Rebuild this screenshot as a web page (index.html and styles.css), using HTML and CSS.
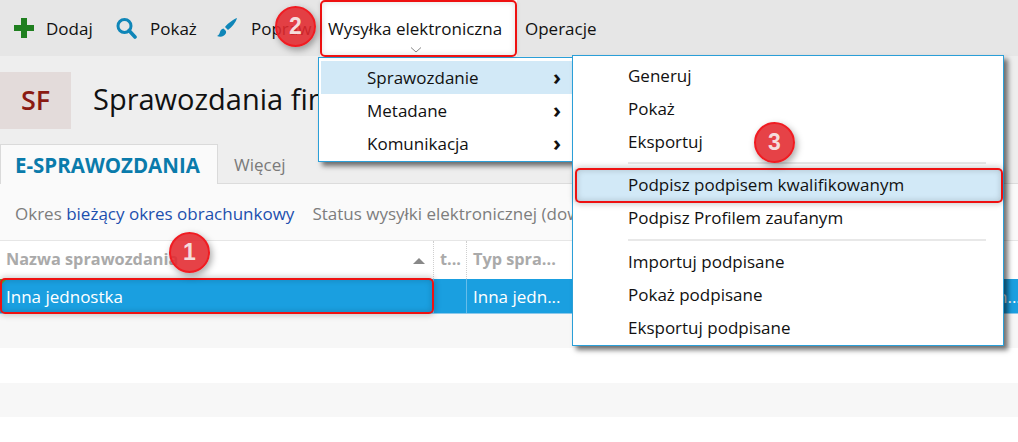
FILE: index.html
```html
<!DOCTYPE html>
<html lang="pl">
<head>
<meta charset="utf-8">
<title>Sprawozdania finansowe</title>
<link rel="stylesheet" href="styles.css">
</head>
<body>
<div class="toolbar">
  <div class="tool tool-add">
    <svg class="ico" width="22" height="22" viewBox="0 0 22 22"><path d="M8 1h6v7h7v6h-7v7H8v-7H1V8h7z" fill="#1f7f1f"/></svg>
    <span>Dodaj</span>
  </div>
  <div class="tool tool-show">
    <svg class="ico" width="22" height="22" viewBox="0 0 22 22"><circle cx="9.500" cy="9" r="6.500" fill="none" stroke="#0f86b8" stroke-width="3"/><path d="M14 13.500l6 6.500" stroke="#0f86b8" stroke-width="3.600" stroke-linecap="round"/></svg>
    <span>Pokaż</span>
  </div>
  <div class="tool tool-edit">
    <svg class="ico" width="22" height="22" viewBox="0 0 22 22"><path d="M21 1c-3 1-9 5-12 9l3 3c4-3 8-8 9-12zM7.500 11.500c-2 .5-3 1.500-3.500 3.500-.3 1.500-1.200 3-3 4 3.500 1.500 7.500.5 8.800-2.500.6-1.500.2-2.700-.3-3z" fill="#0f86b8"/></svg>
    <span>Popraw</span>
  </div>
  <div class="tool tool-send">
    <span>Wysyłka elektroniczna</span>
    <svg class="chev" width="12" height="6" viewBox="0 0 12 6"><path d="M1 .5l5 4.500 5-4.500" fill="none" stroke="#888"/></svg>
  </div>
  <div class="tool tool-ops"><span>Operacje</span></div>
</div>

<div class="module">
  <div class="tile">SF</div>
  <h1 class="module-title">Sprawozdania finansowe</h1>
</div>

<div class="tabs">
  <div class="tab tab-active">E-SPRAWOZDANIA</div>
  <div class="tab">Więcej</div>
</div>

<div class="filters">
  <span>Okres <a class="link">bieżący okres obrachunkowy</a></span>
  <span>Status wysyłki elektronicznej (dowolny)</span>
</div>

<div class="thead">
  <div class="th col-name">Nazwa sprawozdania<i class="sort"></i></div>
  <div class="th col-t">t...</div>
  <div class="th col-type">Typ spra...</div>
</div>
<div class="row row-selected">
  <div class="td col-name"><i class="flag"></i>Inna jednostka</div>
  <div class="td col-t"></div>
  <div class="td col-type">Inna jedn...</div>
  <div class="td col-end">n...</div>
</div>
<div class="row row-odd"></div>
<div class="row row-even"></div>
<div class="row row-odd"></div>

<div class="menu menu-main">
  <div class="mi mi-sub mi-hot"><span>Sprawozdanie</span><b class="arrow">›</b></div>
  <div class="mi mi-sub"><span>Metadane</span><b class="arrow">›</b></div>
  <div class="mi mi-sub"><span>Komunikacja</span><b class="arrow">›</b></div>
</div>

<div class="menu menu-sub">
  <div class="mi">Generuj</div>
  <div class="mi">Pokaż</div>
  <div class="mi">Eksportuj</div>
  <div class="sep"></div>
  <div class="mi mi-hot">Podpisz podpisem kwalifikowanym</div>
  <div class="mi">Podpisz Profilem zaufanym</div>
  <div class="sep sep-wide"></div>
  <div class="mi">Importuj podpisane</div>
  <div class="mi">Pokaż podpisane</div>
  <div class="mi">Eksportuj podpisane</div>
</div>

<div class="mark mark-row"></div>
<div class="mark mark-send"></div>
<div class="mark mark-sign"></div>
<div class="badge badge-1">1</div>
<div class="badge badge-2">2</div>
<div class="badge badge-3">3</div>
</body>
</html>
```
FILE: styles.css
```css
* { box-sizing: border-box; }
html, body { margin: 0; padding: 0; }
body {
  width: 1018px;
  height: 442px;
  overflow: hidden;
  position: relative;
  background: #fff;
  color: #1a1a1a;
  font-family: "Open Sans", "Noto Sans", sans-serif;
  font-size: 17px;
}
.toolbar {
  height: 56px;
  background: #e6e6e6;
  display: flex;
  align-items: center;
  font-size: 17px;
  color: #111;
}
.tool { display: flex; align-items: center; height: 56px; }
.ico { flex: none; margin-right: 13px; }
.tool-add { margin-left: 13px; width: 102px; }
.tool-add .ico { margin-right: 11px; }
.tool-show { width: 101px; }
.tool-edit { width: 111px; }
.tool-send {
  width: 197px;
  padding-left: 8px;
  background: #fff;
  position: relative;
  margin-left: -7px;
  white-space: nowrap;
}
.chev { position: absolute; left: 90px; top: 47px; }
.tool-ops { padding-left: 8px; }
.module {
  height: 87px;
  background: #eeeeee;
  display: flex;
  align-items: flex-start;
  padding-top: 16px;
}
.tile {
  width: 71px;
  height: 57px;
  padding-bottom: 2px;
  background: #e3dbda;
  color: #8a1a12;
  font-size: 27px;
  font-weight: 600;
  display: flex;
  align-items: center;
  justify-content: center;
}
.module-title {
  margin: 3px 0 0 22px;
  font-size: 29px;
  line-height: 48px;
  font-weight: 400;
  color: #111;
  white-space: nowrap;
}
.tabs {
  height: 41px;
  background: #eeeeee;
  display: flex;
  border-bottom: 1px solid #dcdcdc;
  padding-top: 1px;
}
.tab {
  padding: 0 16px;
  height: 40px;
  line-height: 42px;
  color: #7a7a7a;
  font-size: 17px;
}
.tab-active {
  width: 218px;
  height: 40px;
  padding: 0 14px;
  background: #fafafa;
  color: #0a7bab;
  font-weight: 700;
  font-size: 20.500px;
  line-height: 41px;
  border: 1px solid #dadada;
  border-bottom: none;
  white-space: nowrap;
}
.filters {
  height: 57px;
  background: #fafafa;
  border-bottom: 1px solid #e6e6e6;
  display: flex;
  gap: 18px;
  align-items: center;
  padding: 2px 0 0 15px;
  color: #7d7d7d;
  font-size: 17px;
  white-space: nowrap;
}
.link { color: #1c4fae; }
.thead {
  height: 38px;
  background: #fff;
  display: flex;
  color: #aaa;
  font-weight: 700;
  font-size: 16.300px;
  line-height: 37px;
}
.th { position: relative; padding-left: 6px; white-space: nowrap; border-right: 1px dotted #cfcfcf; }
.col-name { width: 434px; }
.col-t { width: 33px; }
.col-type { width: 106px; }
.sort {
  position: absolute;
  right: 8px;
  top: 17px;
  border-left: 6px solid transparent;
  border-right: 6px solid transparent;
  border-bottom: 6px solid #888;
}
.row { height: 34px; display: flex; }
.row-selected {
  height: 35px;
  background: #1a9fe0;
  color: #fff;
  line-height: 36px;
  font-size: 17px;
  border-bottom: 1px solid #8cc8ea;
  position: relative;
  white-space: nowrap;
}
.td { padding-left: 6px; border-right: 1px solid #67bdea; overflow: hidden; }
.col-end { margin-left: auto; width: 21px; padding-left: 0; border: none; }
.flag {
  position: absolute;
  left: 0;
  top: 0;
  border-top: 7px solid #5aa83c;
  border-right: 7px solid transparent;
}
.row-odd { background: #f7f7f7; }
.row-even { background: #fff; height: 35px; }

.menu {
  position: absolute;
  background: #fff;
  border: 1px solid #2a9fd8;
  box-shadow: 4px 4px 5px rgba(0, 0, 0, .55);
  font-size: 17px;
  color: #111;
}
.menu-main { left: 318px; top: 57px; width: 256px; height: 105px; padding: 3px 0 0 2px; }
.menu-sub { left: 572px; top: 55px; width: 432px; height: 291px; padding: 4px 1px 0 2px; }
.mi { height: 33px; line-height: 32px; padding-left: 53px; white-space: nowrap; }
.menu-main .mi { padding-left: 46px; position: relative; line-height: 34px; }
.mi-hot { background: #d2e9f7; }
.arrow {
  position: absolute;
  right: 12px;
  top: 0;
  font-size: 22px;
  line-height: 30px;
  font-weight: 700;
}
.sep { height: 2px; background: #e8e8e8; margin: 3px 16px 5px 53px; }
.sep-wide { margin-top: 3.500px; margin-bottom: 5.500px; }
.mark {
  position: absolute;
  border: 2px solid #ee1111;
  border-radius: 5px;
  box-shadow: 0 0 6px 1px rgba(0, 0, 0, .22), inset 0 0 6px rgba(0, 0, 0, .18);
}
.mark-row { left: 0; top: 278px; width: 434px; height: 36px; }
.mark-send { left: 320px; top: 0; width: 197px; height: 57px; box-shadow: inset 0 0 6px rgba(0, 0, 0, .12), 0 0 4px rgba(0, 0, 0, .12); }
.mark-sign { left: 575px; top: 168px; width: 428px; height: 35px; }
.badge {
  position: absolute;
  width: 41px;
  height: 41px;
  border-radius: 50%;
  background: rgba(226, 40, 45, .88);
  border: 2px solid #f01c22;
  color: #f5dcdc;
  font-family: "Liberation Sans", sans-serif;
  font-size: 23px;
  font-weight: 700;
  line-height: 37px;
  text-align: center;
  box-shadow: 2px 3px 7px rgba(0, 0, 0, .35);
}
.badge-1 { left: 169px; top: 232px; }
.badge-2 { left: 275px; top: 6px; }
.badge-3 { left: 754px; top: 122px; }
```
